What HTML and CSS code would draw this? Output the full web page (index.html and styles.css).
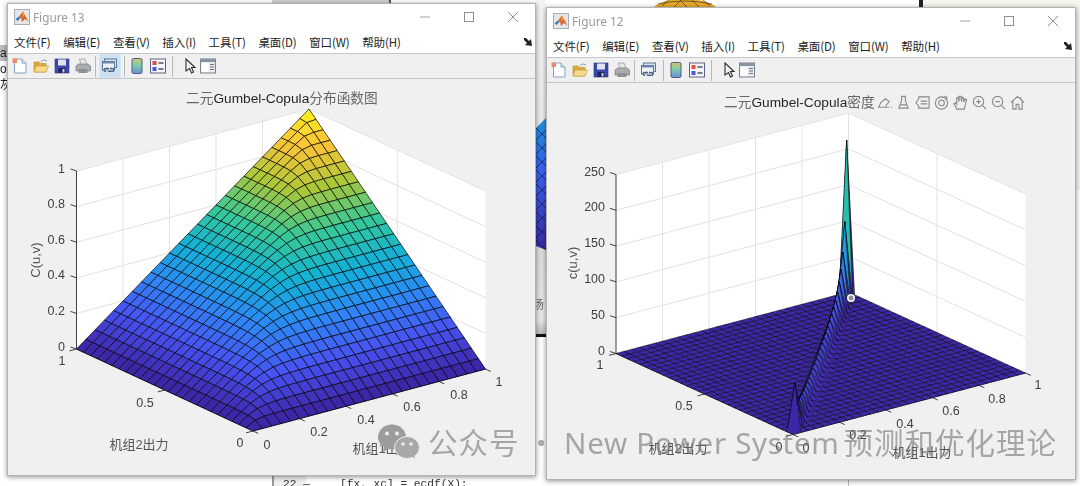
FILE: index.html
```html
<!DOCTYPE html>
<html lang="en">
<head>
  <meta charset="UTF-8" />
  <title>Gumbel-Copula figures</title>
  <link rel="stylesheet" href="styles.css">
</head>
<body>
  <!-- shared toolbar icons -->
  <svg class="icon-defs" aria-hidden="true">
    <symbol id="ic-logo" viewBox="0 0 16 16">
      <rect x="0.5" y="0.5" width="15" height="15" fill="#e4e6ea" stroke="#a8acb4"/>
      <path d="M1.5 10 L5 7.5 L7 8.5 L3.5 12 Z" fill="#3f7fb5"/>
      <path d="M5 7.5 L9 2.5 L12 8 L14.5 12.5 L11 10 L8 13 L7 8.5 Z" fill="#e0662a"/>
      <path d="M9 2.5 L11 6 L8.5 8 Z" fill="#f2a33a"/>
    </symbol>
    <symbol id="ic-new" viewBox="0 0 16 16">
      <path d="M2.5 1 H10 L14 5 V15 H2.5 Z" fill="#fff" stroke="#7fa3c8"/>
      <path d="M10 1 V5 H14" fill="#d9e6f2" stroke="#7fa3c8"/>
      <rect x="0.5" y="0.5" width="4.5" height="4.5" fill="#f08a6a"/>
    </symbol>
    <symbol id="ic-open" viewBox="0 0 16 16">
      <path d="M1 4 H6 L7.5 5.5 H13 V14 H1 Z" fill="#dba93c" stroke="#b98a2a" stroke-width="0.6"/>
      <path d="M1 14 L3 8 H15.5 L13 14 Z" fill="#f6dc8a" stroke="#c39a3a" stroke-width="0.6"/>
      <path d="M8 3.5 Q11 0.5 14 3" fill="none" stroke="#8f9aa8" stroke-width="1"/>
    </symbol>
    <symbol id="ic-save" viewBox="0 0 16 16">
      <rect x="1" y="1" width="14" height="14" fill="#3d49a8" stroke="#2c3583" stroke-width="0.6"/>
      <rect x="4" y="1.5" width="8" height="6" fill="#dfe3f2"/>
      <rect x="4.5" y="10" width="7" height="5" fill="#1e2560"/>
      <rect x="8.5" y="11" width="2" height="3.5" fill="#c8cde0"/>
    </symbol>
    <symbol id="ic-print" viewBox="0 0 16 16">
      <path d="M4.5 1 H10 L12 6.5 H6 Z" fill="#e6e8ea" stroke="#8e9296" stroke-width="0.7"/>
      <path d="M1 8 L3.5 6 H13 L15.5 8 V13 H1 Z" fill="#a9adb0" stroke="#75787c" stroke-width="0.7"/>
      <rect x="3.5" y="11" width="9" height="4" fill="#8c9094"/>
    </symbol>
    <symbol id="ic-link" viewBox="0 0 16 16">
      <rect x="2.5" y="1" width="12" height="8.5" fill="#dbe4ee" stroke="#5a7595"/>
      <rect x="0.5" y="3.5" width="12" height="8.5" fill="#eef2f7" stroke="#5a7595"/>
      <rect x="0.5" y="3.5" width="12" height="2" fill="#6d8cae"/>
      <path d="M4 13.5 a2 1.6 0 0 1 0 -3.2 h3 M8 10.3 h2 a2 1.6 0 0 1 0 3.2 h-4" fill="none" stroke="#46627f" stroke-width="1.2"/>
    </symbol>
    <symbol id="ic-colorbar" viewBox="0 0 16 16">
      <defs>
        <linearGradient id="cb-fill" x1="0" y1="0" x2="0" y2="1">
          <stop offset="0" stop-color="#d8c070"/>
          <stop offset="0.4" stop-color="#82cfa0"/>
          <stop offset="1" stop-color="#6a8fe0"/>
        </linearGradient>
      </defs>
      <rect x="3" y="0.5" width="10" height="15" rx="1.5" fill="url(#cb-fill)" stroke="#4e5c80"/>
    </symbol>
    <symbol id="ic-legend" viewBox="0 0 16 16">
      <rect x="0.5" y="1" width="15" height="14" fill="#f4f5f8" stroke="#5a6488"/>
      <rect x="2.5" y="3" width="4" height="4" fill="#e24a4a"/>
      <rect x="2.5" y="9" width="4" height="4" fill="#4a58d8"/>
      <path d="M8.5 5 H13.5 M8.5 11 H13.5" stroke="#4a5068" stroke-width="1.4"/>
    </symbol>
    <symbol id="ic-cursor" viewBox="0 0 16 16">
      <path d="M4 1 L13 9.5 H9.5 L11.5 14 L9.5 15 L7.5 10.5 L4 13 Z" fill="#f4f4f4" stroke="#2f2f2f" stroke-width="1.1"/>
    </symbol>
    <symbol id="ic-prop" viewBox="0 0 16 16">
      <rect x="0.5" y="1" width="15" height="14" fill="#e9ebee" stroke="#77808c"/>
      <rect x="0.5" y="1" width="15" height="3" fill="#8793a2"/>
      <rect x="1.5" y="5" width="7" height="9" fill="#fff"/>
      <path d="M10 6.5 H14 M10 9 H14 M10 11.5 H14" stroke="#6a7480"/>
    </symbol>
    <symbol id="ic-min" viewBox="0 0 12 12"><path d="M1 6 H11" stroke="#a0a0a0"/></symbol>
    <symbol id="ic-max" viewBox="0 0 12 12"><rect x="1.5" y="1.5" width="9" height="9" fill="none" stroke="#909090"/></symbol>
    <symbol id="ic-close" viewBox="0 0 12 12"><path d="M1 1 L11 11 M11 1 L1 11" stroke="#909090"/></symbol>
    <symbol id="ic-dock" viewBox="0 0 10 10"><path d="M1 1 L3 1 L6 4 L8 2 L9 9 L2 8 L4 6 L1 3 Z" fill="#222"/></symbol>
  </svg>

  <div class="desktop">
    <!-- windows behind the two figures -->
    <div class="back-left">
      <span class="back-sel">a.</span>
      <span>o</span>
      <span>灰</span>
    </div>
    <div class="back-bar"></div>
    <div class="back-fig-top">
      <svg viewBox="0 0 62 8">
        <path d="M0 8 Q8 0 30 0 Q52 0 62 8 Z" fill="#e6a92c"/>
        <path d="M8 7 L16 0 M20 8 L28 0 M33 8 L25 0 M45 8 L37 0 M56 7 L48 0 M4 5 Q30 -1 58 5" fill="none" stroke="#4a3b18" stroke-width="0.7"/>
      </svg>
    </div>
    <div class="back-black"></div>
    <div class="back-right"></div>
    <div class="back-strip">
      <svg class="back-surface" viewBox="0 0 10 132" preserveAspectRatio="none">
        <defs>
          <linearGradient id="back-fill" x1="0" y1="0" x2="0" y2="1">
            <stop offset="0" stop-color="#1c95dc"/>
            <stop offset="0.4" stop-color="#3b62ee"/>
            <stop offset="1" stop-color="#3a2aa6"/>
          </linearGradient>
        </defs>
        <path d="M10 0 V132 L0 128 V10 Z" fill="url(#back-fill)"/>
        <path d="M0 22 L10 12 M0 36 L10 26 M0 50 L10 40 M0 64 L10 54 M0 78 L10 68 M0 92 L10 82 M0 106 L10 96 M0 120 L10 110 M0 10 L10 20 M0 24 L10 34 M0 38 L10 48 M0 52 L10 62 M0 66 L10 76 M0 80 L10 90 M0 94 L10 104 M0 108 L10 118 M0 122 L10 132" stroke="#141a4a" stroke-width="0.7"/>
      </svg>
      <span class="back-char">场</span>
    </div>
    <div class="back-editor">
      <span class="back-gutter">22 —</span>
      <span class="back-code">[fx, xc] = ecdf(X);</span>
    </div>
    <div class="back-line"></div>

    <!-- Figure 13 -->
    <section class="win win-13">
      <header class="titlebar">
        <svg class="logo"><use href="#ic-logo"/></svg>
        <span class="win-title">Figure 13</span>
        <div class="win-buttons">
          <svg><use href="#ic-min"/></svg>
          <svg><use href="#ic-max"/></svg>
          <svg><use href="#ic-close"/></svg>
        </div>
      </header>
      <nav class="menubar">
        <span>文件(F)</span><span>编辑(E)</span><span>查看(V)</span><span>插入(I)</span>
        <span>工具(T)</span><span>桌面(D)</span><span>窗口(W)</span><span>帮助(H)</span>
        <svg class="dock"><use href="#ic-dock"/></svg>
      </nav>
      <div class="toolbar">
        <div class="tool-group">
          <svg class="tool"><use href="#ic-new"/></svg>
          <svg class="tool"><use href="#ic-open"/></svg>
          <svg class="tool"><use href="#ic-save"/></svg>
          <svg class="tool"><use href="#ic-print"/></svg>
        </div>
        <span class="tool-sep"></span>
        <span class="tool-btn tool-on"><svg class="tool"><use href="#ic-link"/></svg></span>
        <span class="tool-sep"></span>
        <div class="tool-group">
          <svg class="tool"><use href="#ic-colorbar"/></svg>
          <svg class="tool"><use href="#ic-legend"/></svg>
        </div>
        <span class="tool-sep tool-sep-last"></span>
        <div class="tool-group tool-group-last">
          <svg class="tool"><use href="#ic-cursor"/></svg>
          <svg class="tool"><use href="#ic-prop"/></svg>
        </div>
      </div>
      <svg class="plot" id="plot-13"></svg>
    </section>

    <!-- Figure 12 -->
    <section class="win win-12">
      <header class="titlebar">
        <svg class="logo"><use href="#ic-logo"/></svg>
        <span class="win-title">Figure 12</span>
        <div class="win-buttons">
          <svg><use href="#ic-min"/></svg>
          <svg><use href="#ic-max"/></svg>
          <svg><use href="#ic-close"/></svg>
        </div>
      </header>
      <nav class="menubar">
        <span>文件(F)</span><span>编辑(E)</span><span>查看(V)</span><span>插入(I)</span>
        <span>工具(T)</span><span>桌面(D)</span><span>窗口(W)</span><span>帮助(H)</span>
        <svg class="dock"><use href="#ic-dock"/></svg>
      </nav>
      <div class="toolbar">
        <div class="tool-group">
          <svg class="tool"><use href="#ic-new"/></svg>
          <svg class="tool"><use href="#ic-open"/></svg>
          <svg class="tool"><use href="#ic-save"/></svg>
          <svg class="tool"><use href="#ic-print"/></svg>
        </div>
        <span class="tool-sep"></span>
        <span class="tool-btn"><svg class="tool"><use href="#ic-link"/></svg></span>
        <span class="tool-sep"></span>
        <div class="tool-group">
          <svg class="tool"><use href="#ic-colorbar"/></svg>
          <svg class="tool"><use href="#ic-legend"/></svg>
        </div>
        <span class="tool-sep tool-sep-last"></span>
        <div class="tool-group tool-group-last">
          <svg class="tool"><use href="#ic-cursor"/></svg>
          <svg class="tool"><use href="#ic-prop"/></svg>
        </div>
      </div>
      <svg class="plot plot-dense" id="plot-12"></svg>

      <!-- axes toolbar floating over the plot -->
      <div class="axes-tools">
        <svg viewBox="0 0 16 16"><path d="M1 13 H13 M2 13 L4 8 L9 4 L13 7 L9 12 M15 13 h1"/></svg>
        <svg viewBox="0 0 16 16"><path d="M6 1.5 H10 V6 L13 14 H3 L6 6 Z M4 10.5 H12"/></svg>
        <svg viewBox="0 0 16 16"><path d="M1 8 L4 4 V2 H15 V14 H4 V12 Z M6 6.5 H13 M6 9.5 H13"/></svg>
        <svg viewBox="0 0 16 16"><circle cx="8" cy="8.5" r="6.5"/><circle cx="8" cy="8.5" r="3"/><path d="M11 1 L14 2.5 L12 5"/></svg>
        <svg viewBox="0 0 16 16"><path d="M4 15 L1 9 L2.5 8 L4 10 V3 L5.5 2.5 L6.5 7 V1.5 L8.5 1.5 L9 7 L10 2.5 L11.5 3 L11.5 7.5 L13 4.5 L14.5 5 L13 11 L12 15 Z"/></svg>
        <svg viewBox="0 0 16 16"><circle cx="7" cy="7" r="5.5"/><path d="M11 11 L15 15 M4.5 7 H9.5 M7 4.5 V9.5"/></svg>
        <svg viewBox="0 0 16 16"><circle cx="7" cy="7" r="5.5"/><path d="M11 11 L15 15 M4.5 7 H9.5"/></svg>
        <svg viewBox="0 0 16 16"><path d="M1 8 L8 1.5 L15 8 M3 7 V15 H6.5 V10 H9.5 V15 H13 V7 M11.5 2 V4"/></svg>
      </div>
    </section>

    <!-- watermark over everything -->
    <div class="watermark">
      <svg class="wm-icon" viewBox="0 0 42 36">
        <ellipse cx="14" cy="13" rx="14" ry="12.5" fill="#9c9c9c"/>
        <path d="M6 22 L5 28 L12 24 Z" fill="#9c9c9c"/>
        <ellipse cx="29" cy="23.5" rx="12.5" ry="11" fill="#a8a8a8" stroke="#efefef"/>
        <path d="M34 32 L37 35 L36 30 Z" fill="#a8a8a8"/>
        <circle cx="9" cy="9.5" r="2" fill="#efefef"/><circle cx="19" cy="9.5" r="2" fill="#efefef"/>
        <circle cx="25" cy="20" r="1.7" fill="#efefef"/><circle cx="33" cy="20" r="1.7" fill="#efefef"/>
      </svg>
      <p class="wm-text">公众号<span class="wm-dot">·</span><span class="wm-latin">New Power System</span>预测和优化理论</p>
    </div>
  </div>

  <script src="script.js"></script>
</body>
</html>
```

FILE: styles.css
```css
*, *::before, *::after {
  margin: 0;
  padding: 0;
  box-sizing: border-box;
}

html, body {
  width: 1080px;
  height: 486px;
  overflow: hidden;
  background: #fff;
}
body {
  font-family: "Liberation Sans", "Noto Sans CJK SC", sans-serif;
  color: #222;
}
.icon-defs {
  position: absolute;
  width: 0;
  height: 0;
}

/* reference is a soft screenshot, so everything gets a slight blur */
.desktop {
  position: relative;
  width: 1080px;
  height: 486px;
  overflow: hidden;
  filter: blur(0.4px);
}

/* BACKGROUND WINDOWS */
.back-left {
  position: absolute;
  left: 0; top: 45px;
  width: 8px;
  display: flex;
  flex-direction: column;
  font-size: 12px;
  line-height: 16px;
  overflow: hidden;
}
.back-left span { display: block; }
.back-sel { background: #bdbdbd; }
.back-bar {
  position: absolute;
  left: 272px; top: 0;
  width: 119px; height: 4px;
  background: #d2d2d2;
  border-right: 2px solid #555;
}
.back-fig-top {
  position: absolute;
  left: 654px; top: -1px;
  width: 62px; height: 8px;
}
.back-fig-top svg { display: block; width: 62px; height: 8px; }
.back-black {
  position: absolute;
  left: 919px; top: 0;
  width: 4px; height: 7px;
  background: #222;
}
.back-right {
  position: absolute;
  left: 923px; top: 0;
  width: 157px; height: 190px;
  background: #f6f6ee;
}
.back-strip {
  position: absolute;
  left: 536px; top: 0;
  width: 10px; height: 337px;
  background: linear-gradient(#f4f4f4 0, #ececec 110px, #dcdcdc 260px, #e8e8e8 320px, #bbb 334px);
  border-bottom: 3px solid #111;
}
.back-surface {
  position: absolute;
  left: 0; top: 118px;
  width: 10px; height: 132px;
}
.back-char {
  position: absolute;
  left: -4px; top: 295px;
  font-size: 12px;
  color: #666;
}
.back-editor {
  position: absolute;
  left: 272px; top: 476px;
  width: 274px; height: 10px;
  background: #fff;
  border-left: 2px solid #999;
  font-family: "Liberation Mono", monospace;
  font-size: 11.2px;
  line-height: 16px;
  color: #333;
  white-space: pre;
  overflow: hidden;
  display: flex;
}
.back-gutter {
  width: 66px;
  padding-left: 9px;
  background: linear-gradient(to right, #eee 32px, #fff 32px);
}
.back-line {
  position: absolute;
  left: 848px; top: 479px;
  width: 1px; height: 7px;
  background: #bbb;
}

/* FIGURE WINDOWS */
.win {
  position: absolute;
  display: flex;
  flex-direction: column;
  background: #f0f0f0;
  border: 1px solid #b4b4b4;
  box-shadow: 0 1px 5px rgba(0,0,0,0.45);
}
.win-13 { left: 7px; top: 3px; width: 529px; height: 473px; }
.win-12 { left: 546px; top: 7px; width: 530px; height: 473px; }

.titlebar {
  height: 26px;
  flex: none;
  background: #fff;
  display: flex;
  align-items: center;
  padding-left: 6px;
}
.logo { width: 16px; height: 16px; }
.win-title {
  margin-left: 3px;
  font-family: "Noto Sans", sans-serif;
  font-size: 11.8px;
  color: #9a9a9a;
}
.win-buttons {
  margin-left: auto;
  display: flex;
  gap: 32px;
  padding-right: 16px;
}
.win-buttons svg { width: 12px; height: 12px; display: block; }

.menubar {
  height: 24px;
  flex: none;
  background: #fff;
  border-bottom: 1px solid #c8c8c8;
  display: flex;
  align-items: center;
  gap: 12.6px;
  padding-left: 6px;
  font-family: "Noto Sans CJK SC", sans-serif;
  font-size: 11.5px;
  letter-spacing: -0.1px;
  color: #222;
}
.dock {
  width: 10px;
  height: 10px;
  margin-left: auto;
  margin-right: 2px;
}

.toolbar {
  height: 25px;
  flex: none;
  background: #f0f0f0;
  border-bottom: 1px solid #c4c4c4;
  display: flex;
  align-items: center;
  gap: 4px;
  padding-left: 4px;
}
.tool-group { display: flex; gap: 5px; }
.tool-group-last { gap: 2px; margin-left: 5px; }
.tool { width: 16px; height: 16px; display: block; }
.tool-sep {
  width: 1px;
  height: 21px;
  background: #b8b8b8;
}
.tool-sep-last { margin-left: 2px; }
.tool-btn {
  width: 20px;
  height: 22px;
  display: flex;
  align-items: center;
  justify-content: center;
}
.tool-on {
  background: #cde0f2;
  outline: 1px solid #d6e6f5;
}

/* AXES */
.plot {
  flex: 1;
  display: block;
  min-height: 0;
  width: 100%;
}
.plot text {
  font-family: "Liberation Sans", "Noto Sans CJK SC", sans-serif;
  fill: #404040;
}
.plot .tick { font-size: 12.5px; }
.plot .axis-name { font-size: 13px; fill: #555; }
.plot .title { font-size: 13.7px; fill: #262626; }
.plot .title-cjk { fill: #666; }
.grid-line { stroke: #e2e2e2; stroke-width: 1; }
.axis-line { stroke: #404040; stroke-width: 1; }
.face { stroke: rgba(0,0,0,0.85); stroke-width: 0.8; stroke-linejoin: round; }
.plot-dense .face { stroke-width: 0.55; }
.data-mark { fill: #8e8e8e; stroke: #f4f4f0; stroke-width: 1.6; }

.axes-tools {
  position: absolute;
  left: 330px; top: 87px;
  display: flex;
  gap: 4px;
}
.axes-tools svg {
  width: 15px;
  height: 15px;
  display: block;
  fill: none;
  stroke: #8a8a8a;
  stroke-width: 1.2;
}

/* WATERMARK */
.watermark {
  position: absolute;
  left: 378px; top: 423px;
  display: flex;
  align-items: center;
  gap: 8px;
  white-space: nowrap;
}
.wm-icon { width: 42px; height: 36px; display: block; }
.wm-text {
  font-family: "Noto Sans CJK SC", sans-serif;
  font-size: 29.5px;
  line-height: 36px;
  letter-spacing: 1px;
  color: rgba(110,110,110,0.58);
}
.wm-dot { margin: 0 7px; }
.wm-latin {
  font-family: "Noto Sans", sans-serif;
  letter-spacing: 0.7px;
  margin-right: 4px;
}
```

FILE: script.js
```js
// parula(8), interpolated
const PARULA = [
  [62, 38, 168], [72, 82, 244], [46, 135, 247], [18, 177, 214],
  [55, 200, 151], [171, 199, 57], [254, 195, 56], [249, 251, 21]
];

function parula(t) {
  const p = Math.max(0, Math.min(1, t)) * (PARULA.length - 1);
  const i = Math.min(Math.floor(p), PARULA.length - 2);
  const f = p - i;
  const c = PARULA[i].map((v, k) => Math.round(v + (PARULA[i + 1][k] - v) * f));
  return `rgb(${c.join(',')})`;
}

// Gumbel copula cdf
function gumbelCdf(u, v, th) {
  if (u <= 0 || v <= 0) return 0;
  const a = Math.pow(-Math.log(u), th) + Math.pow(-Math.log(v), th);
  return Math.exp(-Math.pow(a, 1 / th));
}

// Gumbel copula density, zero on the border of the square
function gumbelPdf(u, v, th) {
  if (u <= 0 || v <= 0 || u >= 1 || v >= 1) return 0;
  const lu = -Math.log(u);
  const lv = -Math.log(v);
  // scaled to keep the powers in range
  const m = Math.max(lu, lv);
  const a = Math.pow(lu / m, th) + Math.pow(lv / m, th);
  const s = m * Math.pow(a, 1 / th);
  const k = Math.pow(lu / m, th - 1) * Math.pow(lv / m, th - 1) * Math.pow(a, 1 / th - 2) / m;
  return Math.exp(-s) / (u * v) * k * (s + th - 1);
}

const NS = 'http://www.w3.org/2000/svg';

function add(svg, tag, attrs, text) {
  const el = document.createElementNS(NS, tag);
  for (const k in attrs) el.setAttribute(k, attrs[k]);
  if (text !== undefined) el.textContent = text;
  svg.appendChild(el);
  return el;
}

function drawAxes(cfg) {
  const svg = document.getElementById(cfg.id);
  const r = svg.getBoundingClientRect();
  svg.setAttribute('viewBox', `${r.left} ${r.top} ${r.width} ${r.height}`);

  const { B, R, L, H, zMax } = cfg;
  const pt = (u, v, z) => [
    B[0] + u * (R[0] - B[0]) + v * (L[0] - B[0]),
    B[1] + u * (R[1] - B[1]) + v * (L[1] - B[1]) - (z / zMax) * H
  ];
  const line = (a, b, cls) => add(svg, 'line', { x1: a[0], y1: a[1], x2: b[0], y2: b[1], class: cls });

  // plot box
  const box = [pt(0, 1, zMax), pt(1, 1, zMax), pt(1, 0, zMax), pt(1, 0, 0), pt(0, 0, 0), pt(0, 1, 0)];
  add(svg, 'polygon', { points: box.map(p => p.join(',')).join(' '), fill: '#fff' });

  // grid on the two back walls
  cfg.zTicks.forEach(z => {
    line(pt(0, 1, z), pt(1, 1, z), 'grid-line');
    line(pt(1, 1, z), pt(1, 0, z), 'grid-line');
  });
  [0.2, 0.4, 0.6, 0.8, 1].forEach(x => line(pt(x, 1, 0), pt(x, 1, zMax), 'grid-line'));
  [0.5].forEach(y => line(pt(1, y, 0), pt(1, y, zMax), 'grid-line'));

  // axes and ticks
  line(pt(0, 1, 0), pt(0, 1, zMax), 'axis-line');
  line(pt(0, 1, 0), pt(0, 0, 0), 'axis-line');
  line(pt(0, 0, 0), pt(1, 0, 0), 'axis-line');
  cfg.zTicks.forEach(z => {
    const a = pt(0, 1, z);
    line(a, [a[0] - 6, a[1] - 2], 'axis-line');
  });
  [0, 0.2, 0.4, 0.6, 0.8, 1].forEach(x => line(pt(x, 0, 0), pt(x, -0.03, 0), 'axis-line'));
  [0, 0.5, 1].forEach(y => line(pt(0, y, 0), pt(-0.03, y, 0), 'axis-line'));

  // surface, painted from the back corner to the front
  const N = cfg.cells;
  const Z = [];
  for (let i = 0; i <= N; i++) {
    Z.push([]);
    for (let j = 0; j <= N; j++) Z[i].push(cfg.f(i / N, j / N));
  }
  const cMax = Math.max(...Z.map(row => Math.max(...row)));
  for (let i = N - 1; i >= 0; i--) {
    for (let j = N - 1; j >= 0; j--) {
      const pts = [
        pt(i / N, j / N, Z[i][j]),
        pt((i + 1) / N, j / N, Z[i + 1][j]),
        pt((i + 1) / N, (j + 1) / N, Z[i + 1][j + 1]),
        pt(i / N, (j + 1) / N, Z[i][j + 1])
      ];
      add(svg, 'polygon', {
        points: pts.map(p => p.map(n => n.toFixed(2)).join(',')).join(' '),
        fill: parula(Z[i][j] / cMax),
        class: 'face'
      });
    }
  }

  // labels
  cfg.labels.forEach(([txt, x, y, anchor]) => {
    add(svg, 'text', { x, y, class: 'tick', 'text-anchor': anchor || 'middle', 'dominant-baseline': 'central' }, txt);
  });
  cfg.names.forEach(([txt, x, y]) => {
    add(svg, 'text', { x, y, class: 'axis-name', 'text-anchor': 'middle', 'dominant-baseline': 'central' }, txt);
  });
  const zn = cfg.zName;
  add(svg, 'text', {
    x: zn[1], y: zn[2], class: 'axis-name', 'text-anchor': 'middle', 'dominant-baseline': 'central',
    transform: `rotate(-90 ${zn[1]} ${zn[2]})`
  }, zn[0]);

  // title
  const t = add(svg, 'text', { x: cfg.title.x, y: cfg.title.y, class: 'title', 'dominant-baseline': 'central' });
  cfg.title.parts.forEach(([txt, cjk]) => add(t, 'tspan', cjk ? { class: 'title-cjk' } : {}, txt));

  if (cfg.mark) add(svg, 'circle', { cx: cfg.mark[0], cy: cfg.mark[1], r: 3.2, class: 'data-mark' });
}

drawAxes({
  id: 'plot-13',
  B: [253, 431], R: [485.5, 369], L: [76.5, 349], H: 178, zMax: 1,
  cells: 25,
  f: (u, v) => gumbelCdf(u, v, 7),
  zTicks: [0, 0.2, 0.4, 0.6, 0.8, 1],
  labels: [
    ['1', 65, 169, 'end'], ['0.8', 65, 204, 'end'], ['0.6', 65, 240, 'end'], ['0.4', 65, 275, 'end'],
    ['0.2', 65, 311, 'end'], ['0', 65, 347, 'end'],
    ['1', 62, 361], ['0.5', 145, 403], ['0', 240, 443],
    ['0', 267, 445], ['0.2', 319, 432], ['0.4', 366, 420], ['0.6', 412, 407], ['0.8', 459, 395], ['1', 499, 382]
  ],
  names: [['机组2出力', 139, 444], ['机组1出力', 382, 448]],
  zName: ['C(u,v)', 35, 260],
  title: { x: 186, y: 98, parts: [['二元', 1], ['Gumbel-Copula', 0], ['分布函数图', 1]] }
});

drawAxes({
  id: 'plot-12',
  B: [793, 434.5], R: [1025.5, 373], L: [616, 353.5], H: 179, zMax: 250,
  cells: 30,
  f: (u, v) => gumbelPdf(u, v, 29),
  zTicks: [0, 50, 100, 150, 200, 250],
  labels: [
    ['250', 605, 172, 'end'], ['200', 605, 207, 'end'], ['150', 605, 243, 'end'], ['100', 605, 279, 'end'],
    ['50', 605, 315, 'end'], ['0', 605, 351, 'end'],
    ['1', 600, 365], ['0.5', 684, 406], ['0', 779, 447],
    ['0', 806, 448], ['0.2', 858, 435], ['0.4', 905, 424], ['0.6', 951, 411], ['0.8', 997, 399], ['1', 1038, 385]
  ],
  names: [['机组2出力', 678, 448], ['机组1出力', 922, 452]],
  zName: ['c(u,v)', 572, 263],
  title: { x: 724, y: 102, parts: [['二元', 1], ['Gumbel-Copula', 0], ['密度', 1]] },
  mark: [851, 298]
});
```
